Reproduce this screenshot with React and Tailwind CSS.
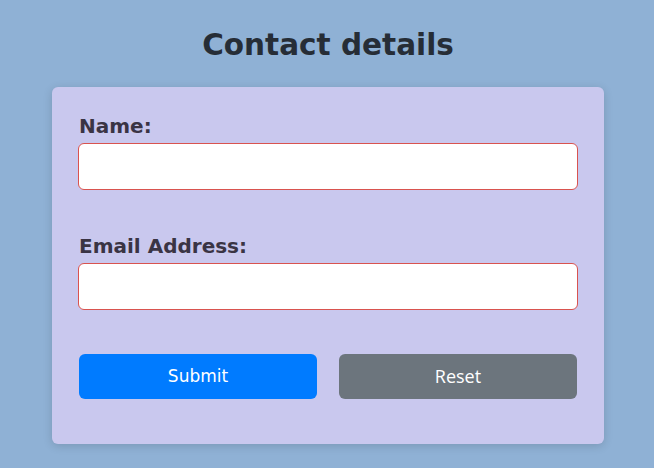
import React from 'react';

const App = () => {
  return (
    <div className="min-h-screen w-full bg-[#8fb1d5] flex flex-col items-center pt-[26px] pl-[2px] font-['DejaVu_Sans',sans-serif]">
      {/* Heading */}
      <h1 className="text-[29.5px] leading-[38px] font-bold text-[#262d36] mb-[23px]">Contact details</h1>

      {/* Card */}
      <form className="w-[552px] bg-[#c9c8ee] rounded-md shadow-[0_2px_10px_rgba(0,0,0,0.15)] px-[26px] pt-[26px] pb-[45px]">
        <label className="block text-[20px] leading-[26px] font-bold text-[#3a3444] mb-[4px] pl-px">Name:</label>
        <input type="text" className="block w-full h-[47px] bg-white border border-[#d9534f] rounded-md mb-[43px]" />

        <label className="block text-[20px] leading-[26px] font-bold text-[#3a3444] mb-[4px] pl-px">Email Address:</label>
        <input type="email" className="block w-full h-[47px] bg-white border border-[#d9534f] rounded-md mb-[44px]" />

        <div className="flex gap-[22px] px-px">
          <button type="button" className="flex-1 h-[45px] rounded-md bg-[#007bff] text-white text-[17px] pt-px">Submit</button>
          <button type="button" className="flex-1 h-[45px] rounded-md bg-[#6c757d] text-white text-[18px] font-['Open_Sans',sans-serif]">Reset</button>
        </div>
      </form>
    </div>
  );
};

export default App;
